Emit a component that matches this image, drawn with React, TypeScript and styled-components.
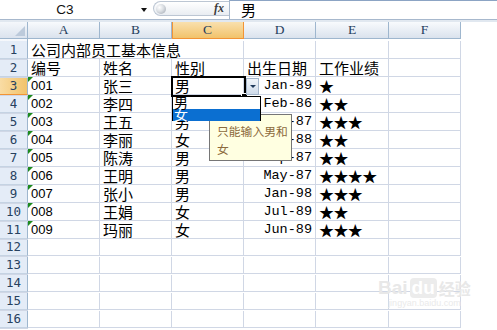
import React from 'react';
import styled, { createGlobalStyle, css } from 'styled-components';

const CJK = '"Noto Sans CJK SC", "Liberation Sans", sans-serif';
const GRID = '28px 72px 72px 72px 72px 73px 72px';

const GlobalStyle = createGlobalStyle`
  html, body {
    margin: 0;
    padding: 0;
    background: #fff;
    overflow: hidden;
  }
  body {
    font-family: ${CJK};
  }
`;

const Window = styled.div`
  position: relative;
  width: 497px;
  height: 330px;
  overflow: hidden;
  background: #fff;
`;

const FormulaBar = styled.div`
  display: flex;
  height: 19px;
  border-bottom: 1px solid #a7b8cd;
  background: #fff;
`;

const NameBox = styled.div`
  display: flex;
  align-items: center;
  width: 153px;
  flex-shrink: 0;
`;

const NameText = styled.div`
  width: 130px;
  text-align: center;
  font-family: 'Liberation Sans', Arial, sans-serif;
  font-size: 13.5px;
  color: #111;
`;

const NameArrow = styled.div`
  margin-left: 11px;
  width: 0;
  height: 0;
  border-left: 3.5px solid transparent;
  border-right: 3.5px solid transparent;
  border-top: 4px solid #111;
`;

const FxPill = styled.div`
  display: flex;
  align-items: center;
  width: 76px;
  height: 15px;
  margin-top: 1px;
  box-sizing: border-box;
  border: 1px solid #bcc6d3;
  border-right: none;
  border-radius: 8px 0 0 8px;
  background: linear-gradient(#ffffff, #e9edf2);
  flex-shrink: 0;
`;

const Knob = styled.div`
  width: 10px;
  height: 10px;
  margin-left: 2px;
  border-radius: 50%;
  background: radial-gradient(circle at 35% 35%, #ffffff 0%, #d9dde2 45%, #9aa2ac 100%);
`;

const Fx = styled.span`
  margin-left: auto;
  margin-right: 5px;
  font-family: 'Liberation Serif', serif;
  font-style: italic;
  font-weight: bold;
  font-size: 12px;
  color: #3c3c3c;
`;

const FormulaInput = styled.div`
  flex: 1;
  border-top: 1px solid #8ca4c4;
  border-left: 1px solid #a7b8cd;
  padding-left: 11px;
  font-family: ${CJK};
  font-size: 15px;
  line-height: 17px;
  color: #000;
`;

const Spacer = styled.div`
  height: 2px;
  background: #e1e8f0;
`;

const Sheet = styled.div`
  position: relative;
`;

const HeaderRow = styled.div`
  display: grid;
  grid-template-columns: ${GRID};
  height: 19px;
`;

const Corner = styled.div`
  position: relative;
  box-sizing: border-box;
  border-right: 1px solid #9eb6ce;
  border-bottom: 1px solid #9eb6ce;
  background: linear-gradient(#f4f7fb, #dbe3ee);
  &::after {
    content: '';
    position: absolute;
    right: 2px;
    bottom: 2px;
    border-left: 10px solid transparent;
    border-bottom: 10px solid #bccadb;
  }
`;

const ColHead = styled.div<{ $active?: boolean }>`
  display: flex;
  align-items: center;
  justify-content: center;
  box-sizing: border-box;
  border-right: 1px solid #9eb6ce;
  border-bottom: 1px solid #9eb6ce;
  background: linear-gradient(#f8fafd, #dae2ed);
  font-family: 'Liberation Serif', serif;
  font-size: 13.5px;
  color: #26405e;
  ${(p) =>
    p.$active &&
    css`
      background: linear-gradient(#f9e0ae, #f2c36b);
      border-right-color: #f29436;
      border-bottom-color: #f29436;
      box-shadow: inset 1px 0 0 #f29436;
    `}
`;

const Row = styled.div`
  display: grid;
  grid-template-columns: ${GRID};
  height: 18px;
`;

const RowHead = styled.div<{ $active?: boolean }>`
  display: flex;
  align-items: center;
  justify-content: center;
  box-sizing: border-box;
  border-right: 1px solid #9eb6ce;
  border-bottom: 1px solid #c5d3e3;
  background: #e4ecf7;
  font-family: 'DejaVu Sans Mono', monospace;
  font-size: 12.5px;
  color: #27415f;
  ${(p) =>
    p.$active &&
    css`
      background: linear-gradient(90deg, #f9dca4, #f2c36b);
      border-bottom-color: #f29436;
    `}
`;

type Kind = 'cjk' | 'num' | 'date' | 'star';

const kinds: Record<Kind, ReturnType<typeof css>> = {
  cjk: css`
    font-family: ${CJK};
    font-size: 15px;
    line-height: 17px;
  `,
  num: css`
    font-family: 'Liberation Sans', Arial, sans-serif;
    font-size: 13px;
    line-height: 16px;
  `,
  date: css`
    font-family: 'Liberation Mono', monospace;
    font-size: 13.5px;
    line-height: 16px;
  `,
  star: css`
    font-family: ${CJK};
    font-size: 15px;
    line-height: 17px;
    letter-spacing: -0.6px;
  `,
};

const Cell = styled.div<{ $kind?: Kind; $right?: boolean; $span?: number; $flag?: boolean }>`
  position: relative;
  display: flex;
  align-items: flex-end;
  justify-content: ${(p) => (p.$right ? 'flex-end' : 'flex-start')};
  box-sizing: border-box;
  padding: 0 3px;
  border-right: 1px solid #d0d7e5;
  border-bottom: 1px solid #d0d7e5;
  white-space: nowrap;
  color: #000;
  grid-column: span ${(p) => p.$span || 1};
  ${(p) => kinds[p.$kind || 'cjk']}
  ${(p) =>
    p.$flag &&
    css`
      &::before {
        content: '';
        position: absolute;
        top: 0;
        left: 0;
        border-top: 5px solid #1d8a1d;
        border-right: 5px solid transparent;
      }
    `}
`;

const SelectBox = styled.div`
  position: absolute;
  left: 171px;
  top: 54px;
  width: 75px;
  height: 21px;
  box-sizing: border-box;
  border: 2px solid #000;
  z-index: 3;
`;

const FillHandle = styled.div`
  position: absolute;
  left: 241px;
  top: 71px;
  width: 5px;
  height: 5px;
  background: #000;
  border: 1px solid #fff;
  z-index: 3;
`;

const DropButton = styled.div`
  position: absolute;
  left: 246px;
  top: 56px;
  width: 13px;
  height: 17px;
  box-sizing: border-box;
  border: 1px solid #a3b5cb;
  background: linear-gradient(#f1f5fa, #cfdbea);
  display: flex;
  align-items: center;
  justify-content: center;
  z-index: 4;
  &::after {
    content: '';
    border-left: 3px solid transparent;
    border-right: 3px solid transparent;
    border-top: 3px solid #1f3a5c;
  }
`;

const List = styled.div`
  position: absolute;
  left: 172px;
  top: 74px;
  width: 89px;
  height: 25px;
  box-sizing: border-box;
  border: 1px solid #000;
  background: #fff;
  z-index: 5;
`;

const ListItem = styled.div<{ $selected?: boolean }>`
  height: 12px;
  padding-left: 1px;
  font-family: ${CJK};
  font-size: 14px;
  line-height: 11px;
  color: ${(p) => (p.$selected ? '#fff' : '#000')};
  background: ${(p) => (p.$selected ? '#0b6fd1' : '#fff')};
`;

const Tooltip = styled.div`
  position: absolute;
  left: 209px;
  top: 92px;
  width: 83px;
  height: 47px;
  box-sizing: border-box;
  padding: 7px 1px 0 7px;
  border: 1px solid #767676;
  background: #ffffe1;
  font-family: ${CJK};
  font-size: 11.8px;
  line-height: 18px;
  color: #8c6a3c;
  z-index: 4;
`;

const Watermark = styled.div`
  position: absolute;
  left: 378px;
  top: 256px;
  display: flex;
  flex-direction: column;
  align-items: center;
  color: #e8e8e8;
  z-index: 2;
`;

const MarkLogo = styled.div`
  display: flex;
  align-items: center;
  font-family: 'Liberation Sans', Arial, sans-serif;
  font-weight: bold;
  font-size: 19px;
  line-height: 20px;
`;

const MarkDu = styled.span`
  margin: 0 2px;
  padding: 0 2px;
  border-radius: 4px;
  background: #ececec;
  color: #fff;
`;

const MarkCn = styled.span`
  font-family: ${CJK};
  font-size: 16px;
`;

const MarkUrl = styled.div`
  font-family: 'Liberation Sans', Arial, sans-serif;
  font-size: 9px;
  color: #eaeaea;
`;

type Emp = { id: string; name: string; sex: string; born: string; stars: number };

const employees: Emp[] = [
  { id: '001', name: '张三', sex: '男', born: 'Jan-89', stars: 1 },
  { id: '002', name: '李四', sex: '女', born: 'Feb-86', stars: 2 },
  { id: '003', name: '王五', sex: '男', born: 'Mar-87', stars: 3 },
  { id: '004', name: '李丽', sex: '女', born: 'Apr-88', stars: 2 },
  { id: '005', name: '陈涛', sex: '男', born: 'Sep-87', stars: 2 },
  { id: '006', name: '王明', sex: '男', born: 'May-87', stars: 4 },
  { id: '007', name: '张小', sex: '男', born: 'Jan-98', stars: 3 },
  { id: '008', name: '王娟', sex: '女', born: 'Jul-89', stars: 2 },
  { id: '009', name: '玛丽', sex: '女', born: 'Jun-89', stars: 3 },
];

const columns = ['A', 'B', 'C', 'D', 'E', 'F', 'G'];
const headings = ['编号', '姓名', '性别', '出生日期', '工作业绩'];

function Blank({ n }: { n: number }) {
  return (
    <>
      {Array.from({ length: n }).map((_, i) => (
        <Cell key={i} />
      ))}
    </>
  );
}

export default function App(): JSX.Element {
  return (
    <Window>
      <GlobalStyle />
      <FormulaBar>
        <NameBox>
          <NameText>C3</NameText>
          <NameArrow />
        </NameBox>
        <FxPill>
          <Knob />
          <Fx>fx</Fx>
        </FxPill>
        <FormulaInput>男</FormulaInput>
      </FormulaBar>
      <Spacer />
      <Sheet>
        <HeaderRow>
          <Corner />
          {columns.map((c) => (
            <ColHead key={c} $active={c === 'C'}>
              {c}
            </ColHead>
          ))}
        </HeaderRow>

        <Row>
          <RowHead>1</RowHead>
          <Cell $span={3}>公司内部员工基本信息</Cell>
          <Blank n={4} />
        </Row>

        <Row>
          <RowHead>2</RowHead>
          {headings.map((h) => (
            <Cell key={h}>{h}</Cell>
          ))}
          <Blank n={2} />
        </Row>

        {employees.map((e, i) => (
          <Row key={e.id}>
            <RowHead $active={i === 0}>{i + 3}</RowHead>
            <Cell $kind="num" $flag>
              {e.id}
            </Cell>
            <Cell>{e.name}</Cell>
            <Cell>{e.sex}</Cell>
            <Cell $kind="date" $right>
              {e.born}
            </Cell>
            <Cell $kind="star">{'★'.repeat(e.stars)}</Cell>
            <Blank n={2} />
          </Row>
        ))}

        {[12, 13, 14, 15, 16].map((n) => (
          <Row key={n}>
            <RowHead>{n}</RowHead>
            <Blank n={7} />
          </Row>
        ))}

        <SelectBox />
        <FillHandle />
        <DropButton />
        <Tooltip>只能输入男和女</Tooltip>
        <List>
          <ListItem>男</ListItem>
          <ListItem $selected>女</ListItem>
        </List>
        <Watermark>
          <MarkLogo>
            Bai<MarkDu>du</MarkDu>
            <MarkCn>经验</MarkCn>
          </MarkLogo>
          <MarkUrl>jingyan.baidu.com</MarkUrl>
        </Watermark>
      </Sheet>
    </Window>
  );
}
